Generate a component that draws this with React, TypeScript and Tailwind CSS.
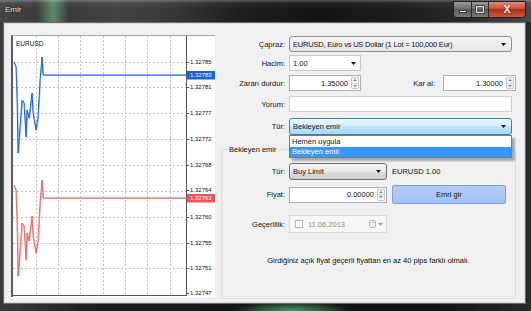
import React from 'react'

const gridY = [27, 52, 78, 104, 130, 156, 182, 208, 233]
const gridX = [24, 46, 68, 91, 113, 135, 158]
const axisLabels: [string, number][] = [
  ['1.32785', 27],
  ['1.32781', 52],
  ['1.32777', 78],
  ['1.32772', 104],
  ['1.32768', 130],
  ['1.32764', 155],
  ['1.32760', 182],
  ['1.32755', 208],
  ['1.32751', 233],
  ['1.32747', 258],
]

const series = 'M2,27 L4,32 L5,62 L6,118 L8,92 L10,65 L12,68 L14,102 L15,75 L17,83 L20,58 L21,78 L24,95 L26,82 L28,45 L30,22 L31,40 L174,40'

function Chart() {
  return (
    <div className="h-[262px] w-[204px] shrink-0 border-l-2 border-t border-l-[#5a5a5a] border-t-[#a9a9a9] bg-white">
      <svg width="202" height="261" viewBox="1 1 202 261" className="block">
        {gridY.map((y) => (
          <line key={'h' + y} x1="1" x2="174" y1={y + 0.5} y2={y + 0.5} stroke="#c4c4c4" strokeDasharray="2 2" />
        ))}
        {gridX.map((x) => (
          <line key={'v' + x} x1={x + 0.5} x2={x + 0.5} y1="1" y2="260" stroke="#c4c4c4" strokeDasharray="2 2" />
        ))}
        <line x1="174.5" x2="174.5" y1="0" y2="261" stroke="#555" />
        <line x1="0" x2="175" y1="260.5" y2="260.5" stroke="#555" />
        {axisLabels.map(([t, y]) => (
          <g key={t}>
            <line x1="175" x2="177" y1={y + 0.5} y2={y + 0.5} stroke="#555" />
            <text x="178" y={y + 2.2} fontSize="6" fontFamily="'Liberation Sans', Arial, sans-serif" fill="#111">
              {t}
            </text>
          </g>
        ))}
        <text x="4" y="11" fontSize="6.5" fontFamily="'Liberation Sans', Arial, sans-serif" fill="#111">
          EURUSD
        </text>
        <path d={series} fill="none" stroke="#7fb0f0" strokeWidth="1" transform="translate(0.6,0.4)" />
        <path d={series} fill="none" stroke="#1f63d6" strokeWidth="1" />
        <g transform="translate(0,123)">
          <path d={series} fill="none" stroke="#f7a3a3" strokeWidth="1" transform="translate(0.6,0.4)" />
          <path d={series} fill="none" stroke="#e85c5c" strokeWidth="0.9" />
        </g>
        <rect x="175" y="36" width="28" height="8.5" fill="#1762e0" />
        <text x="178" y="42.3" fontSize="6" fontFamily="'Liberation Sans', Arial, sans-serif" fill="#fff">
          1.32783
        </text>
        <rect x="175" y="159" width="28" height="8.5" fill="#ef5454" />
        <text x="178" y="165.3" fontSize="6" fontFamily="'Liberation Sans', Arial, sans-serif" fill="#fff">
          1.32763
        </text>
      </svg>
    </div>
  )
}

function Arrow({ color = '#111' }: { color?: string }) {
  return (
    <svg width="5" height="3" viewBox="0 0 5 3" className="shrink-0">
      <path d="M0,0 L5,0 L2.5,3 Z" fill={color} />
    </svg>
  )
}

function Spin({ value, width }: { value: string; width: string }) {
  return (
    <div className={`flex h-[16px] items-center border border-[#abadb3] bg-white ${width}`}>
      <span className="flex-1 pr-[3px] text-right">{value}</span>
      <div className="mr-[1px] flex h-[12px] w-[8px] flex-col rounded-[1px] border border-[#c8c8c8] bg-[#f2f2f2]">
        <div className="flex flex-1 items-center justify-center border-b border-[#d4d4d4]">
          <svg width="4" height="2" viewBox="0 0 4 2">
            <path d="M0,2 L4,2 L2,0 Z" fill="#7a8aa0" />
          </svg>
        </div>
        <div className="flex flex-1 items-center justify-center">
          <svg width="4" height="2" viewBox="0 0 4 2">
            <path d="M0,0 L4,0 L2,2 Z" fill="#7a8aa0" />
          </svg>
        </div>
      </div>
    </div>
  )
}

function Label({ children }: { children: React.ReactNode }) {
  return <span className="w-[64px] shrink-0 text-right">{children}</span>
}

function InnerLabel({ children }: { children: React.ReactNode }) {
  return <span className="w-[63px] shrink-0 text-right">{children}</span>
}

function OrderForm() {
  return (
    <div className="ml-[6px] flex w-[295px] flex-col pt-[13px] text-[7.5px] leading-[9px] text-[#111]">
      <div className="flex items-center gap-[4px]">
        <Label>Çapraz:</Label>
        <div className="flex h-[16px] w-[223px] items-center rounded-[3px] border border-[#8e8f8f] bg-[linear-gradient(#f7f7f7,#e6e6e6)] pl-[3px] pr-[5px]">
          <span className="flex-1 tracking-[-0.2px]">EURUSD, Euro vs US Dollar (1 Lot = 100,000 Eur)</span>
          <Arrow />
        </div>
      </div>

      <div className="mt-[3px] flex items-center gap-[4px]">
        <Label>Hacim:</Label>
        <div className="flex h-[16px] w-[72px] items-center border border-[#c4c7cc] bg-white pl-[3px] pr-[4px]">
          <span className="flex-1">1.00</span>
          <Arrow />
        </div>
      </div>

      <div className="mt-[4px] flex items-center gap-[4px]">
        <Label>Zararı durdur:</Label>
        <Spin value="1.35000" width="w-[72px]" />
        <span className="w-[70px] shrink-0 text-right">Kar al:</span>
        <div className="ml-[4px]">
          <Spin value="1.30000" width="w-[73px]" />
        </div>
      </div>

      <div className="mt-[5px] flex items-center gap-[4px]">
        <Label>Yorum:</Label>
        <div className="h-[16px] w-[223px] border border-[#c9ccd1] bg-white" />
      </div>

      <div className="relative z-10 mt-[6px] flex items-center gap-[4px]">
        <Label>Tür:</Label>
        <div className="relative w-[223px]">
          <div className="flex h-[17px] items-center rounded-[3px] border border-[#3c7fb1] bg-[linear-gradient(#eaf6fd_0%,#d9f0fc_45%,#bee6fd_50%,#a7d9f5_100%)] pl-[3px] pr-[5px]">
            <span className="flex-1 text-[#0e1a3a]">Bekleyen emir</span>
            <Arrow />
          </div>
          <div className="absolute left-0 top-full w-full border border-[#7a7a7a] bg-white shadow-[3px_3px_2px_rgba(0,0,0,0.3)]">
            <div className="h-[11px] pl-[2px] leading-[11px]">Hemen uygula</div>
            <div className="h-[10px] bg-[#3399ff] pl-[2px] leading-[10px] text-white">Bekleyen emir</div>
          </div>
        </div>
      </div>

      <fieldset className="mt-[10px] h-[154px] rounded-[3px] border border-[#d5dfe5] px-0">
        <legend className="ml-[6px] px-[1px] leading-[9px]">Bekleyen emir</legend>

        <div className="mt-[9px] flex items-center gap-[4px]">
          <InnerLabel>Tür:</InnerLabel>
          <div className="flex h-[17px] w-[98px] items-center rounded-[3px] border border-[#707070] bg-[linear-gradient(#f2f2f2_0%,#ebebeb_50%,#dddddd_51%,#cfcfcf_100%)] pl-[3px] pr-[5px]">
            <span className="flex-1">Buy Limit</span>
            <Arrow />
          </div>
          <span className="ml-[1px]">EURUSD 1.00</span>
        </div>

        <div className="mt-[5px] flex items-center gap-[4px]">
          <InnerLabel>Fiyat:</InnerLabel>
          <Spin value="0.00000" width="w-[98px]" />
          <button
            type="button"
            className="ml-[1px] flex h-[19px] w-[114px] items-center justify-center rounded-[2px] border border-[#7d9fd6] bg-[linear-gradient(#b3cdf8,#a2c0f3)] text-[7.5px] leading-[9px] text-[#111]"
          >
            Emri gir
          </button>
        </div>

        <div className="mt-[11px] flex items-center gap-[4px]">
          <InnerLabel>Geçerlilik:</InnerLabel>
          <div className="flex h-[18px] w-[98px] items-center border border-[#d9d9d9] bg-[#f7f7f7] pl-[5px] pr-[3px] text-[#8c8c8c]">
            <span className="h-[8px] w-[8px] border border-[#b5b5b5] bg-white" />
            <span className="ml-[5px] flex-1">11.06.2013</span>
            <svg width="7" height="8" viewBox="0 0 7 8" className="mr-[2px]">
              <rect x="0.5" y="0.5" width="6" height="7" rx="1.5" fill="#f4f4f4" stroke="#b8b8b8" />
              <line x1="1" x2="6" y1="2.5" y2="2.5" stroke="#cfcfcf" />
            </svg>
            <Arrow color="#a0a0a0" />
          </div>
        </div>

        <p className="mt-[23px] text-center">Girdiğiniz açık fiyat geçerli fiyattan en az 40 pips farklı olmalı.</p>
      </fieldset>
    </div>
  )
}

function TitleBar() {
  return (
    <div className="flex h-[22px] items-start bg-[linear-gradient(180deg,rgba(255,255,255,0.28)_0px,rgba(255,255,255,0.05)_3px,rgba(0,0,0,0)_10px),linear-gradient(90deg,#474747_0%,#3c3c3c_7%,#5d8a6a_10%,#3a3a3a_13%,#444_22%,#383838_32%,#1e1e1e_45%,#141414_60%,#1c1c1c_75%,#2a2a2a_88%,#4a4a4a_100%)]">
      <span className="ml-[5px] mt-[5px] text-[8px] leading-[10px] text-[#e4e4e4] [text-shadow:0_0_3px_#000]">Emir</span>
      <div className="ml-auto mr-[5px] mt-[1px] flex h-[17px] overflow-hidden rounded-b-[4px] border border-[#1e1e1e]">
        <div className="flex w-[18px] items-center justify-center border-r border-[#2a2a2a] bg-[linear-gradient(#9a9a9a,#6e6e6e_45%,#5a5a5a_50%,#7a7a7a)]">
          <span className="mt-[3px] h-[3px] w-[8px] border border-[#333] bg-white" />
        </div>
        <div className="flex w-[17px] items-center justify-center border-r border-[#2a2a2a] bg-[linear-gradient(#9a9a9a,#6e6e6e_45%,#5a5a5a_50%,#7a7a7a)]">
          <span className="h-[7px] w-[8px] border border-[#ddd] shadow-[0_0_0_1px_#444]" />
        </div>
        <div className="flex w-[36px] items-center justify-center bg-[linear-gradient(#e08a7a,#c8503c_45%,#b02a1a_50%,#d05a40)] text-[10px] font-bold leading-[10px] text-white [text-shadow:0_0_2px_#400]">
          X
        </div>
      </div>
    </div>
  )
}

export default function App() {
  return (
    <div className="flex h-[311px] w-[531px] flex-col overflow-hidden bg-[#141414] font-['Liberation_Sans',Arial,sans-serif]">
      <TitleBar />
      <div className="flex h-[289px] bg-[radial-gradient(ellipse_60px_10px_at_55%_100%,#4f9a6a_0%,rgba(0,0,0,0)_100%),linear-gradient(90deg,#3a3a3a,#1a1a1a_20%,#111_80%,#2a2a2a)] pb-[7px] pl-[3px] pr-[5px]">
        <div className="flex flex-1 border border-[#6c6c6c] bg-[#f0f0f0] shadow-[inset_0_0_0_1px_#d9dde2]">
          <div className="ml-[7px] mt-[12px]">
            <Chart />
          </div>
          <OrderForm />
        </div>
      </div>
    </div>
  )
}
